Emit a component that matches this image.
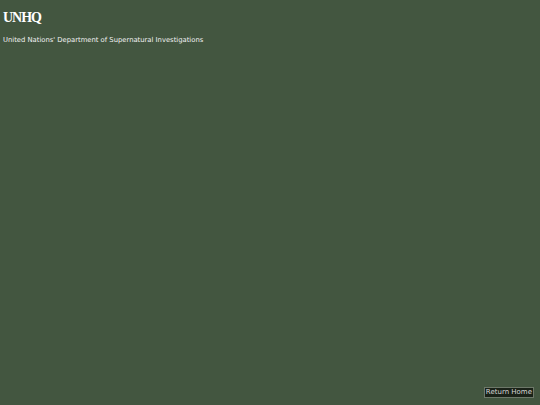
export default function App() {
  return (
    <div className="relative w-[540px] h-[405px] bg-[#435640] overflow-hidden">
      <header className="px-[3px] pt-[9px]">
        <h1 className="text-white text-[14px] leading-[18px] font-black tracking-[-1px] font-['Liberation_Serif',serif]">
          UNHQ
        </h1>
        <p className="mt-[9px] text-[#f2f2f2] text-[6.8px] leading-[9px] font-['DejaVu_Sans',sans-serif]">
          United Nations' Department of Supernatural Investigations
        </p>
      </header>
      <button className="absolute right-[6px] bottom-[7px] bg-[#1a2218] border border-[#6d7869] text-[#d6d6d6] text-[7px] leading-[9px] px-[1px] font-['DejaVu_Sans',sans-serif]">
        Return Home
      </button>
    </div>
  );
}
